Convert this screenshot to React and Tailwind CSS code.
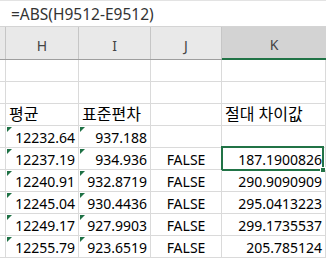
import React from "react";

const font = { fontFamily: '"Noto Sans", "Noto Sans CJK KR", sans-serif' };

function Tri() {
  return (
    <span className="absolute left-[1px] top-[1px] w-0 h-0 border-t-[5px] border-t-[#1e7145] border-r-[5px] border-r-transparent" />
  );
}

function Cell({ w, children, align = "right", tri = false, selected = false, grow = false, ko = false }) {
  const just = align === "right" ? "justify-end" : align === "center" ? "justify-center" : "justify-start";
  return (
    <div
      className={`relative h-full shrink-0 border-r border-[#dadada] flex items-end px-[3px] ${grow ? "flex-1" : ""} ${just}`}
      style={grow ? undefined : { width: w }}
    >
      {tri && <Tri />}
      {selected && (
        <div className="absolute left-[-1px] top-[-2px] right-[1px] bottom-[-2px] border-2 border-[#217346]">
          <div className="absolute right-[-4px] bottom-[-4px] w-[6px] h-[6px] bg-[#217346] border border-white" />
        </div>
      )}
      <span
        className={`${ko ? "text-[16px] leading-[21px]" : "text-[14px] leading-[19px]"} text-[#000] whitespace-nowrap relative`}
      >
        {children}
      </span>
    </div>
  );
}

const rows = [
  { h: "", i: "", j: "", k: "" },
  { h: "", i: "", j: "", k: "" },
  { h: "평균", i: "표준편차", j: "", k: "절대 차이값", header: true },
  { h: "12232.64", i: "937.188", j: "", k: "", tri: true },
  { h: "12237.19", i: "934.936", j: "FALSE", k: "187.1900826", tri: true, sel: true },
  { h: "12240.91", i: "932.8719", j: "FALSE", k: "290.9090909", tri: true },
  { h: "12245.04", i: "930.4436", j: "FALSE", k: "295.0413223", tri: true },
  { h: "12249.17", i: "927.9903", j: "FALSE", k: "299.1735537", tri: true },
  { h: "12255.79", i: "923.6519", j: "FALSE", k: "205.785124", tri: true },
];

export default function App() {
  return (
    <div className="w-[326px] h-[258px] overflow-hidden bg-white flex flex-col" style={font}>
      <div className="h-[27px] shrink-0 border-t border-[#e3e3e3] border-b border-b-[#d4d4d4] flex items-center pl-[11px] pt-[3px]">
        <span className="text-[15.5px] text-[#333] leading-none">=ABS(H9512-E9512)</span>
      </div>
      <div className="h-[33px] shrink-0 flex bg-[#e9e9e9] border-b border-[#9e9e9e]">
        <div className="w-[6px] shrink-0 border-r border-[#c6c6c6]" />
        {["H", "I", "J"].map((c, idx) => (
          <div
            key={c}
            className="shrink-0 flex items-center justify-center pt-[4px] text-[14px] text-[#444] border-r border-[#c6c6c6]"
            style={{ width: idx === 0 ? 73 : idx === 1 ? 72 : 71 }}
          >
            {c}
          </div>
        ))}
        <div className="flex-1 flex items-center justify-center pt-[4px] text-[14px] text-[#444] bg-[#d3d3d3] border-b-2 border-[#217346] mb-[-1px]">
          K
        </div>
      </div>
      {rows.map((r, idx) => (
        <div key={idx} className="h-[22px] shrink-0 flex border-b border-[#dadada]">
          <div className="w-[6px] shrink-0 border-r border-[#dadada]" />
          <Cell w={73} align={r.header ? "left" : "right"} tri={r.tri} ko={r.header}>
            {r.h}
          </Cell>
          <Cell w={72} align={r.header ? "left" : "right"} tri={r.tri} ko={r.header}>
            {r.i}
          </Cell>
          <Cell w={71} align="center">
            {r.j}
          </Cell>
          <Cell grow align={r.header ? "left" : "right"} selected={r.sel} ko={r.header}>
            {r.k}
          </Cell>
        </div>
      ))}
    </div>
  );
}
